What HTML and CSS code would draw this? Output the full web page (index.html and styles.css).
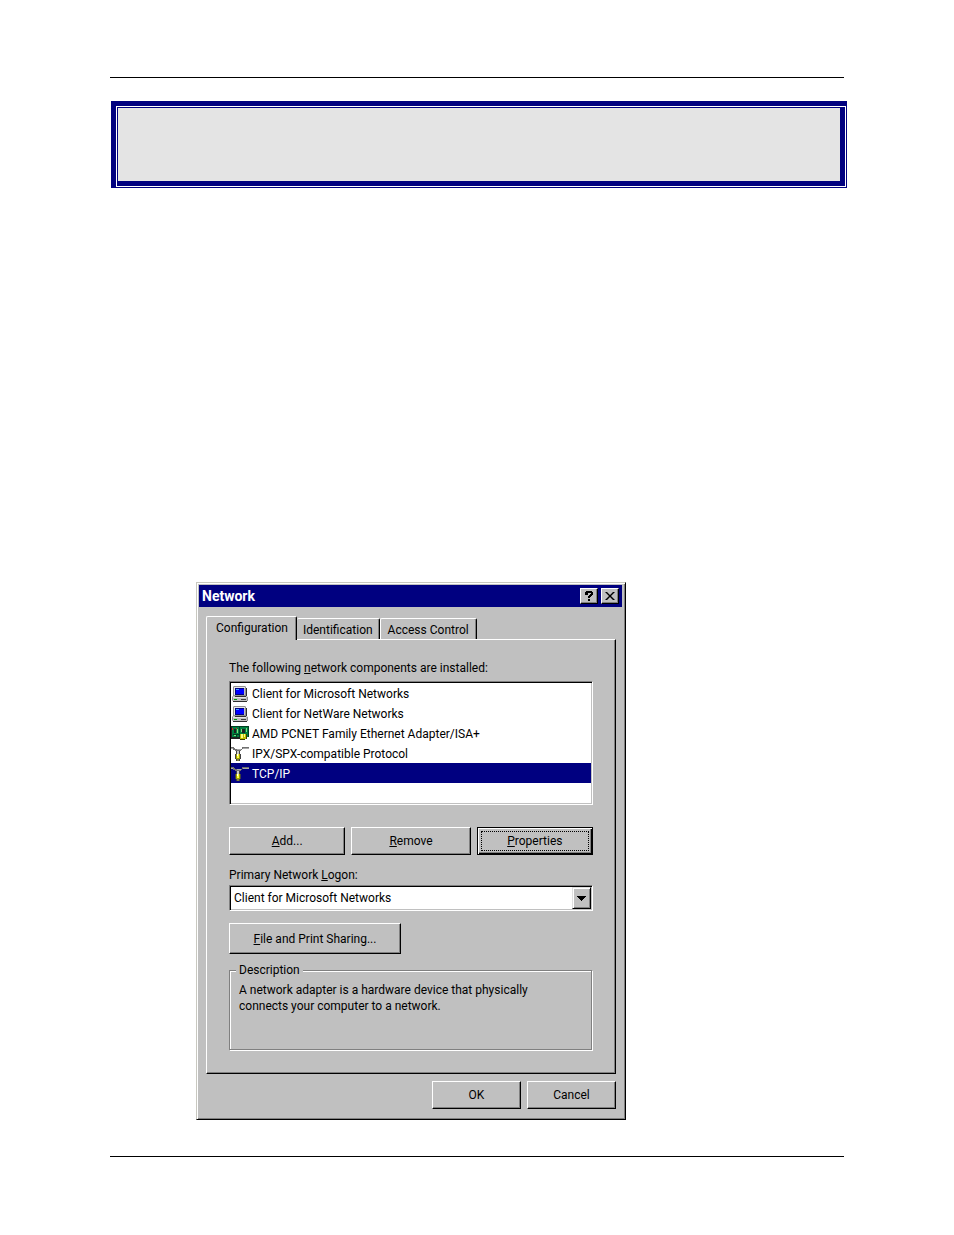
FILE: index.html
```html
<!DOCTYPE html>
<html lang="en">
<head>
<meta charset="utf-8">
<title>Network</title>
<link rel="stylesheet" href="styles.css">
</head>
<body>
<svg class="defs" aria-hidden="true">
  <symbol id="computer" viewBox="0 0 18 16">
    <path fill="#c0c0c0" d="M2 0h13v10H2zM1 10h15l1 1v4H1z"/>
    <path fill="#909090" d="M3 0h11v1H3zM2 1h1v9H2zM3 9h11v1H3zM1 11h1v3H1zM14 1h1v9h-1zM16 11h1v4h-1z"/>
    <path fill="#303030" d="M15 2h1v8h-1zM4 10h11v1H4zM2 15h14v1H2z"/>
    <path fill="#e8e8e8" d="M3 1h11v1H3zM3 1h1v8H3zM2 11h13v1H2z"/>
    <path fill="#000080" d="M4 2h9v7H4z"/>
    <path fill="#00f" d="M5 3h8v5H5z"/>
    <path fill="#40a0ff" d="M5 3h3v1H5z"/>
    <path fill="#00a000" d="M3 13h3v1H3z"/>
    <path fill="#404040" d="M10 13h5v1h-5z"/>
  </symbol>
  <symbol id="adapter" viewBox="0 0 18 16">
    <path fill="#202020" d="M0 0h2v13H0zM2 11h8v2H2z"/>
    <path fill="#008040" d="M1 0h17v11H1z"/>
    <path fill="#004020" d="M1 0h17v1H1zM8 1h1v10H8zM2 8h6v1H2zM17 1h1v10h-1zM5 9h1v3H5z"/>
    <path fill="#202020" d="M3 3h2v4H3zM11 3h3v4h-3z"/>
    <path fill="#e02020" d="M1 2h1v2H1zM5 2h1v1H5z"/>
    <path fill="#80e080" d="M6 3h1v4H6zM15 2h1v4h-1zM3 9h2v1H3zM10 3h1v3h-1z"/>
    <path fill="#c0c000" d="M9 8h6v5H9z"/>
    <path fill="#ffff80" d="M10 8h2v4h-2zM13 8h1v3h-1z"/>
    <path fill="#404000" d="M9 13h5v1H9zM15 8h1v5h-1z"/>
  </symbol>
  <symbol id="protocol" viewBox="0 0 18 16">
    <path fill="#707070" d="M0 1h3v1h1v1h2v1h4V3h1V1h7v1h-6v1h-1v1h-1v1H4V4H2V3H0z"/>
    <path fill="#a8a8a8" d="M0 2h2v1H0zM12 2h6v1h-6zM6 3h4v1H6z"/>
    <path fill="#404040" d="M5 5h4v3H5zM4 8h6v5H4zM5 13h4v2H5z"/>
    <path fill="#c8c8c8" d="M6 5h2v3H6z"/>
    <path fill="#a0a000" d="M5 8h4v5H5z"/>
    <path fill="#ffff40" d="M6 8h2v4H6z"/>
    <path fill="#fff" d="M6 8h1v2H6z"/>
    <path fill="#808040" d="M6 13h2v2H6z"/>
  </symbol>
</svg>

<main class="page">
  <div class="note"><div class="note-inner"></div></div>

  <section class="dialog" aria-labelledby="dialog-title">
    <header class="titlebar">
      <h1 class="title" id="dialog-title">Network</h1>
      <button class="caption-button" type="button" aria-label="Help">
        <svg class="caption-icon" viewBox="0 0 10 10"><path d="M2 0h6v1h1v3H8v1H7v1H6v1H4V5h1V4h1V3h1V2H4v2H1V1h1zM4 8h2v2H4z"/></svg>
      </button>
      <button class="caption-button" type="button" aria-label="Close">
        <svg class="caption-icon" viewBox="0 0 10 10"><path d="M0 1h2l3 3 3-3h2L6 5l4 4H8L5 6 2 9H0l4-4z"/></svg>
      </button>
    </header>

    <div class="body">
      <div class="tabs" role="tablist">
        <button class="tab tab-active" type="button" role="tab" aria-selected="true">Configuration</button>
        <button class="tab tab-joined" type="button" role="tab" aria-selected="false">Identification</button>
        <button class="tab" type="button" role="tab" aria-selected="false">Access Control</button>
      </div>

      <div class="panel" role="tabpanel">
        <div class="label" id="components-label">The following <u>n</u>etwork components are installed:</div>
        <ul class="list" role="listbox" aria-labelledby="components-label">
          <li class="item" role="option"><svg class="icon"><use href="#computer"/></svg>Client for Microsoft Networks</li>
          <li class="item" role="option"><svg class="icon"><use href="#computer"/></svg>Client for NetWare Networks</li>
          <li class="item" role="option"><svg class="icon"><use href="#adapter"/></svg>AMD PCNET Family Ethernet Adapter/ISA+</li>
          <li class="item" role="option"><svg class="icon"><use href="#protocol"/></svg>IPX/SPX-compatible Protocol</li>
          <li class="item item-selected" role="option" aria-selected="true"><svg class="icon"><use href="#protocol"/></svg>TCP/IP</li>
        </ul>

        <div class="actions">
          <button class="button" type="button"><u>A</u>dd...</button>
          <button class="button" type="button"><u>R</u>emove</button>
          <button class="button button-default" type="button"><span class="focus"><u>P</u>roperties</span></button>
        </div>

        <label class="label" for="logon">Primary Network <u>L</u>ogon:</label>
        <div class="combo">
          <select class="combo-select" id="logon">
            <option>Client for Microsoft Networks</option>
          </select>
          <span class="combo-arrow"><svg class="arrow-icon" viewBox="0 0 9 5"><path d="M0 0h9v1H8v1H7v1H6v1H5v1H4V4H3V3H2V2H1V1H0z"/></svg></span>
        </div>

        <button class="button button-sharing" type="button"><u>F</u>ile and Print Sharing...</button>

        <fieldset class="group">
          <legend class="legend">Description</legend>
          <p class="description">A network adapter is a hardware device that physically connects your computer to a network.</p>
        </fieldset>
      </div>

      <footer class="footer">
        <button class="button" type="button">OK</button>
        <button class="button" type="button">Cancel</button>
      </footer>
    </div>
  </section>
</main>
</body>
</html>
```
FILE: styles.css
```css
* {
  box-sizing: border-box;
}

body {
  margin: 0;
  background: #fff;
  color: #000;
  font: 12px/16px Roboto, "Liberation Sans", sans-serif;
}

button,
select {
  font: inherit;
  color: inherit;
  margin: 0;
  border-radius: 0;
}

.defs {
  display: none;
}

.page {
  margin: 77px 110px 0;
  padding: 23px 0 36px;
  border: solid #000;
  border-width: 1px 0;
}

.note {
  margin: 0 -3px 0 1px;
  padding: 5px 1px 1px 5px;
  background: #000080;
}

.note-inner {
  height: 81px;
  background: #e4e4e4;
  border: 1px solid #fff;
  box-shadow: inset 1px 1px #000080, inset -5px -5px #000080;
}

.dialog {
  max-width: 430px;
  margin: 394px 0 0 86px;
  padding: 1px;
  background: #c0c0c0;
  border: 1px solid;
  border-color: #c8c8c0 #000 #000 #c8c8c0;
  box-shadow: inset 1px 1px #fff, inset -1px -1px #808080;
}

.titlebar {
  display: flex;
  align-items: center;
  gap: 3px;
  height: 22px;
  margin: 1px 2px 1px 1px;
  padding: 0 3px;
  background: #000080;
}

.title {
  flex: 1;
  margin: 0;
  color: #fff;
  font-size: 14px;
  line-height: 16px;
  font-weight: 700;
}

.caption-button {
  display: grid;
  place-items: center;
  width: 18px;
  height: 16px;
  padding: 0;
  background: #c0c0c0;
  border: 1px solid;
  border-color: #fff #000 #000 #fff;
  box-shadow: inset -1px -1px #808080;
}

.caption-icon {
  width: 10px;
  height: 10px;
}

.body {
  padding: 8px 8px 9px;
}

.tabs {
  display: flex;
  align-items: flex-end;
  height: 23px;
}

.tab {
  height: 21px;
  padding: 2px 7px 0;
  background: #c0c0c0;
  border: solid;
  border-width: 1px 1px 0;
  border-color: #fff #000 #fff #fff;
  border-radius: 2px 2px 0 0;
  box-shadow: inset -1px 0 #808080;
  white-space: nowrap;
}

.tab-active {
  position: relative;
  height: 24px;
  margin-bottom: -1px;
  padding: 0 8px 2px 9px;
  border-color: #fff #000 #c0c0c0 #fff;
}

.tab-joined {
  padding: 2px 6px 0;
  border-left: 0;
}

.panel {
  padding: 20px 22px 23px;
  border: 1px solid;
  border-color: #fff #000 #000 #fff;
  box-shadow: inset -1px -1px #808080;
}

.label {
  display: block;
}

.list {
  height: 124px;
  margin: 5px 0 22px;
  padding: 1px;
  list-style: none;
  background: #fff;
  border: 1px solid;
  border-color: #808080 #fff #fff #808080;
  box-shadow: inset 1px 1px #000, inset -1px -1px #c0c0c0;
}

.item {
  display: flex;
  align-items: center;
  gap: 3px;
  height: 20px;
  padding: 2px 0 0;
}

.item-selected {
  background: #000080;
  color: #fff;
}

.icon {
  width: 18px;
  height: 16px;
}

.actions {
  display: grid;
  grid-template-columns: 116fr 119fr 116fr;
  gap: 6px;
  margin-bottom: 12px;
}

.button {
  height: 28px;
  padding: 0;
  background: #c0c0c0;
  border: 1px solid;
  border-color: #fff #000 #000 #fff;
  box-shadow: inset -1px -1px #808080;
}

.button-default {
  padding: 3px;
  border-color: #000;
  box-shadow: inset 1px 1px #fff, inset -1px -1px #000, inset -2px -2px #808080;
}

.focus {
  display: block;
  height: 20px;
  line-height: 18px;
  border: 1px dotted #000;
}

.combo {
  display: flex;
  height: 26px;
  margin: 2px 0 12px;
  padding: 1px;
  background: #fff;
  border: 1px solid;
  border-color: #808080 #fff #fff #808080;
  box-shadow: inset 1px 1px #000, inset -1px -1px #c0c0c0;
}

.combo-select {
  flex: 1;
  min-width: 0;
  padding: 0 3px;
  background: none;
  border: 0;
  appearance: none;
}

.combo-arrow {
  display: grid;
  place-items: center;
  width: 19px;
  background: #c0c0c0;
  border: 1px solid;
  border-color: #e0e0e0 #000 #000 #e0e0e0;
  box-shadow: inset 1px 1px #fff, inset -1px -1px #808080;
  pointer-events: none;
}

.arrow-icon {
  width: 9px;
  height: 5px;
}

.button-sharing {
  width: 172px;
  height: 31px;
}

.group {
  height: 88px;
  margin: 8px 1px 0 0;
  padding: 4px 9px;
  border: 1px solid #808080;
  box-shadow: 1px 1px #fff, inset 1px 1px #fff;
}

.legend {
  padding: 0 3px;
  margin-left: -3px;
  background: #c0c0c0;
}

.description {
  max-width: 320px;
  margin: 0;
}

.footer {
  display: flex;
  justify-content: flex-end;
  gap: 6px;
  padding-top: 7px;
}

.footer .button {
  width: 89px;
}
```
